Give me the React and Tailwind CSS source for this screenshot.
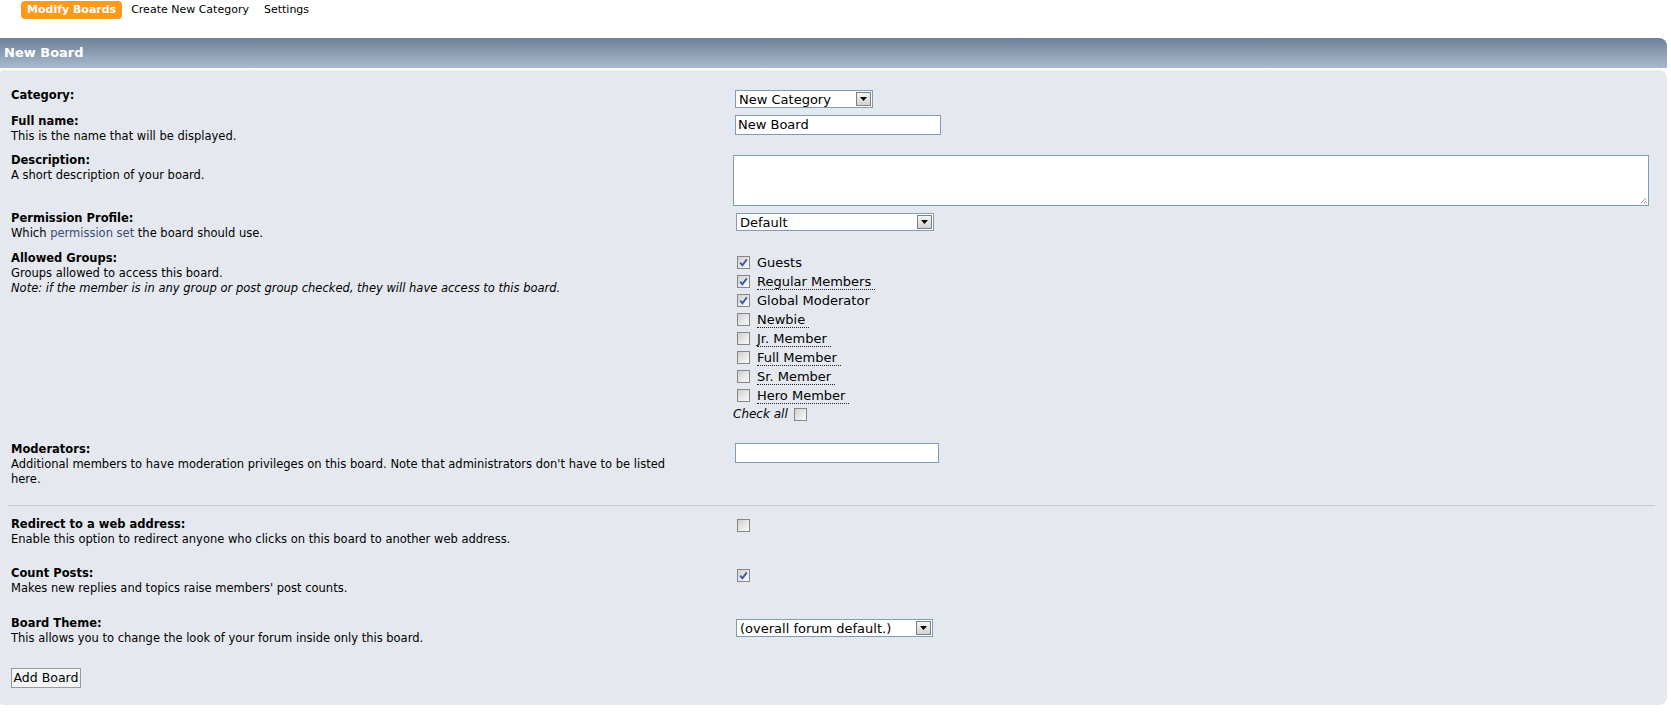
import React from 'react';

const Box = ({ checked }) => (
  <span className="inline-flex h-[13px] w-[13px] shrink-0 items-center justify-center border border-[#858686] bg-linear-to-br from-[#cfcfcf] to-[#fcfcfc]">
    {checked && (
      <svg viewBox="0 0 11 11" className="h-[11px] w-[11px]">
        <path d="M2.2 5.6 L4.4 8.2 L8.8 2.4" stroke="#3d55a3" strokeWidth="1.8" fill="none" />
      </svg>
    )}
  </span>
);

const Select = ({ value, className }) => (
  <div className={`flex h-[18px] items-center border border-[#7f9db9] bg-white ${className}`}>
    <span className="flex-1 pl-[3px] text-[13px] leading-none">{value}</span>
    <span className="m-px flex h-[14px] w-[15px] items-center justify-center border border-[#808080] bg-linear-to-b from-[#f6f6f6] to-[#d2d2d2]">
      <svg viewBox="0 0 7 4" className="h-[4px] w-[7px]">
        <path d="M0 0 H7 L3.5 4 Z" fill="#000" />
      </svg>
    </span>
  </div>
);

const TextInput = ({ value, className }) => (
  <div className={`flex h-[20px] items-center border border-[#7f9db9] bg-white pl-[2px] text-[13px] ${className}`}>
    {value}
  </div>
);

const groups = [
  { name: 'Guests', checked: true, dotted: false },
  { name: 'Regular Members', checked: true, dotted: true },
  { name: 'Global Moderator', checked: true, dotted: false },
  { name: 'Newbie', checked: false, dotted: true },
  { name: 'Jr. Member', checked: false, dotted: true },
  { name: 'Full Member', checked: false, dotted: true },
  { name: 'Sr. Member', checked: false, dotted: true },
  { name: 'Hero Member', checked: false, dotted: true },
];

const Desc = ({ children }) => <div className="text-[11.5px] leading-[15px]">{children}</div>;

const Field = ({ label, desc, control, className, right }) => (
  <div className={`flex ${className}`}>
    <div className="w-[722px] shrink-0 pr-[66px]">
      <div className="text-[11.5px] font-bold leading-[15px]">{label}</div>
      {desc}
    </div>
    <div className={right}>{control}</div>
  </div>
);

export default function App() {
  return (
    <div className="min-h-[726px] bg-white pr-[4px] font-['DejaVu_Sans',Verdana,sans-serif] text-black">
      <div className="flex h-[38px] items-start pl-[21px] pt-px text-[11px]">
        <span className="flex h-[18px] items-center rounded-[4px] bg-[#fd9a1c] pl-[6px] pr-[6px] font-bold text-white">
          Modify Boards
        </span>
        <span className="flex h-[18px] items-center px-[9px]">Create New Category</span>
        <span className="flex h-[18px] items-center px-[6px]">Settings</span>
      </div>

      <div className="flex h-[30px] items-center rounded-tr-[8px] bg-linear-to-b from-[#6e8197] to-[#a8bad0] pl-[4px] text-[13px] font-bold text-white">
        New Board
      </div>

      <div className="mt-[2px] rounded-r-[8px] rounded-l-[3px] bg-[#e5e9ef] pb-[17px] pl-[11px] pr-[12px] pt-[18px]">
        <Field
          label="Category:"
          right="pl-[2px] pt-[2px]"
          control={<Select value="New Category" className="w-[138px]" />}
        />
        <Field
          className="mt-[6px]"
          label="Full name:"
          desc={<Desc>This is the name that will be displayed.</Desc>}
          right="pl-[2px] pt-px"
          control={<TextInput value="New Board" className="w-[206px]" />}
        />
        <Field
          className="mt-[9px]"
          label="Description:"
          desc={<Desc>A short description of your board.</Desc>}
          right="flex-1 pt-[2px]"
          control={
            <div className="relative h-[51px] w-[916px] border border-[#7f9db9] bg-white">
              <svg viewBox="0 0 8 8" className="absolute bottom-[1px] right-[1px] h-[8px] w-[8px]">
                <path d="M7 2 L2 7 M7 5 L5 7" stroke="#9a9a9a" strokeWidth="1" />
              </svg>
            </div>
          }
        />
        <Field
          className="mt-[5px]"
          label="Permission Profile:"
          desc={
            <Desc>
              Which <span className="text-[#3a4a7a]">permission set</span> the board should use.
            </Desc>
          }
          right="pl-[3px] pt-[2px]"
          control={<Select value="Default" className="w-[198px]" />}
        />
        <Field
          className="mt-[10px]"
          label="Allowed Groups:"
          desc={
            <>
              <Desc>Groups allowed to access this board.</Desc>
              <Desc>
                <em>Note: if the member is in any group or post group checked, they will have access to this board.</em>
              </Desc>
            </>
          }
          right="pt-[2px]"
          control={
            <div className="text-[13px]">
              {groups.map((g) => (
                <div key={g.name} className="flex h-[19px] items-center pl-[4px]">
                  <Box checked={g.checked} />
                  <span
                    className={
                      g.dotted
                        ? 'ml-[7px] border-b border-dotted border-[#222] pr-[4px] leading-[15px]'
                        : 'ml-[7px] leading-[15px]'
                    }
                  >
                    {g.name}
                  </span>
                </div>
              ))}
              <div className="flex h-[18px] items-center">
                <em className="text-[12px]">Check all</em>
                <span className="ml-[6px] flex">
                  <Box />
                </span>
              </div>
            </div>
          }
        />
        <Field
          className="mt-[19px]"
          label="Moderators:"
          desc={
            <Desc>
              Additional members to have moderation privileges on this board. Note that administrators don't have to be listed
              here.
            </Desc>
          }
          right="pl-[2px] pt-px"
          control={<TextInput value="" className="w-[204px]" />}
        />

        <hr className="ml-[-3px] mt-[18px] border-0 border-t border-[#c5c9ce]" />

        <Field
          className="mt-[11px]"
          label="Redirect to a web address:"
          desc={<Desc>Enable this option to redirect anyone who clicks on this board to another web address.</Desc>}
          right="flex items-start pl-[4px] pt-[2px]"
          control={<Box />}
        />
        <Field
          className="mt-[19px]"
          label="Count Posts:"
          desc={<Desc>Makes new replies and topics raise members' post counts.</Desc>}
          right="flex items-start pl-[4px] pt-[3px]"
          control={<Box checked />}
        />
        <Field
          className="mt-[20px]"
          label="Board Theme:"
          desc={<Desc>This allows you to change the look of your forum inside only this board.</Desc>}
          right="pl-[3px] pt-[3px]"
          control={<Select value="(overall forum default.)" className="w-[197px]" />}
        />

        <div className="mt-[22px] flex h-[20px] w-[70px] items-center justify-center border border-[#9a9a9a] bg-[#f3f4f6] text-[12.5px]">
          Add Board
        </div>
      </div>
    </div>
  );
}
